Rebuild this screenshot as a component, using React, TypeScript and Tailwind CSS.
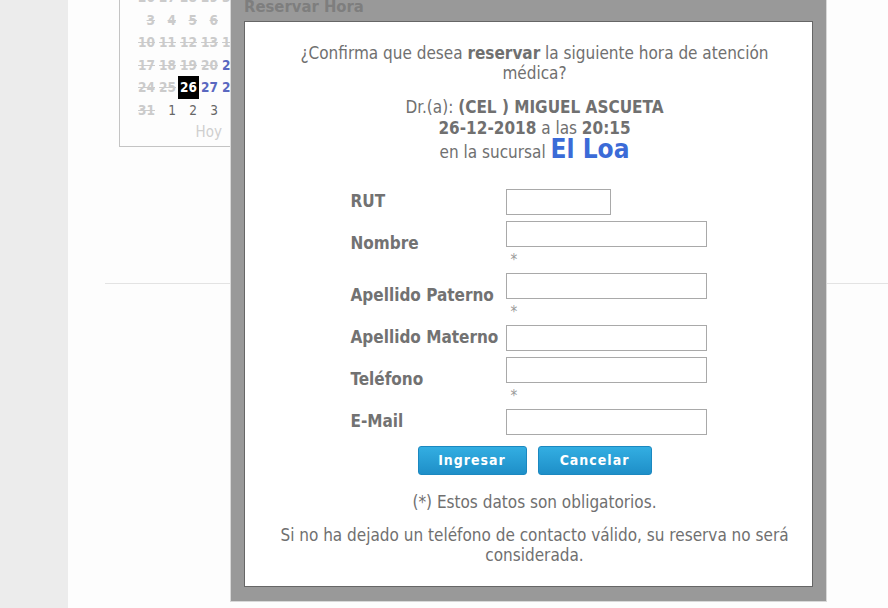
import React from 'react';

const font = { fontFamily: '"DejaVu Sans Condensed", "DejaVu Sans", sans-serif' };

type Cell = { n: string; kind: 'old' | 'sel' | 'free' | 'next' };

const weeks: Cell[][] = [
  ['26', '27', '28', '29', '30'].map((n) => ({ n, kind: 'old' as const })),
  ['3', '4', '5', '6', '7'].map((n) => ({ n, kind: 'old' as const })),
  ['10', '11', '12', '13', '14'].map((n) => ({ n, kind: 'old' as const })),
  [
    { n: '17', kind: 'old' },
    { n: '18', kind: 'old' },
    { n: '19', kind: 'old' },
    { n: '20', kind: 'old' },
    { n: '21', kind: 'free' },
  ],
  [
    { n: '24', kind: 'old' },
    { n: '25', kind: 'old' },
    { n: '26', kind: 'sel' },
    { n: '27', kind: 'free' },
    { n: '28', kind: 'free' },
  ],
  [
    { n: '31', kind: 'old' },
    { n: '1', kind: 'next' },
    { n: '2', kind: 'next' },
    { n: '3', kind: 'next' },
    { n: '4', kind: 'next' },
  ],
];

const cellCls: Record<Cell['kind'], string> = {
  old: 'font-bold text-[#cbcbcb] line-through',
  sel: 'font-bold bg-black text-white',
  free: 'font-bold text-[#5a68c0]',
  next: 'text-[#666]',
};

function Calendar() {
  return (
    <div className="mt-[-14px] ml-[51px] w-[150px] border-l border-b border-[#c4c4c4] pl-[16px] pb-[2px] text-[13.5px]">
      {weeks.map((w, i) => (
        <div key={i} className="flex h-[22.5px]">
          {w.map((c, j) => (
            <div key={j} className={`flex h-full w-[21px] items-center justify-end pr-[2px] ${cellCls[c.kind]}`}>
              {c.n}
            </div>
          ))}
        </div>
      ))}
      <div className="flex h-[23px] w-[86px] items-center justify-end text-[15px] text-[#cfcfcf]">Hoy</div>
    </div>
  );
}

const rows: { label: string; w: string; req?: boolean }[] = [
  { label: 'RUT', w: 'w-[105px]' },
  { label: 'Nombre', w: 'w-[201px]', req: true },
  { label: 'Apellido Paterno', w: 'w-[201px]', req: true },
  { label: 'Apellido Materno', w: 'w-[201px]' },
  { label: 'Teléfono', w: 'w-[201px]', req: true },
  { label: 'E-Mail', w: 'w-[201px]' },
];

function Form() {
  return (
    <table className="mx-auto mt-[23px] border-collapse text-left">
      <tbody>
        {rows.map((r) => (
          <tr key={r.label}>
            <td className="w-[155px] py-[3px] align-middle text-[17px] font-bold text-[#727272]">{r.label}</td>
            <td className="w-[201px] py-[3px] align-top">
              <input className={`block h-[26px] ${r.w} border border-[#a9a9a9] bg-white outline-none`} />
              {r.req && <div className="h-[20px] pl-[5px] pt-[3px] text-[15px] leading-[20px] text-[#9a9a9a]">*</div>}
            </td>
          </tr>
        ))}
      </tbody>
    </table>
  );
}

function Dialog() {
  const btn =
    'h-[29px] rounded-[3px] border border-[#1b88c0] bg-gradient-to-b from-[#33aee2] to-[#1e8fc8] text-[14px] font-bold tracking-[1px] text-white';
  return (
    <div className="absolute left-[230px] top-[-10px] flex h-[612px] w-[597px] flex-col border border-[#d8d8d8] bg-[#999999] px-[13px] pb-[14px]">
      <div className="h-[30px] text-[16.5px] font-bold leading-[32px] text-[#7e7e7e]">Reservar Hora</div>
      <div className="flex-1 border border-[#666] bg-white text-center text-[17px] text-[#707070]">
        <div className="pl-[12px]">
          <p className="mt-[21px] leading-[20px]">
            ¿Confirma que desea <b>reservar</b> la siguiente hora de atención
            <br />
            médica?
          </p>
          <div className="mt-[14px] leading-[21px]">
            <div>
              Dr.(a): <b>(CEL ) MIGUEL ASCUETA</b>
            </div>
            <div>
              <b>26-12-2018</b> a las <b>20:15</b>
            </div>
            <div className="leading-[21px]">
              en la sucursal <span className="text-[26px] font-bold text-[#3b6bd7]">El Loa</span>
            </div>
          </div>
        </div>
        <Form />
        <div className="pl-[12px]">
          <div className="mt-[8px] flex justify-center gap-[11px]">
            <button className={`${btn} w-[109px]`}>Ingresar</button>
            <button className={`${btn} w-[114px]`}>Cancelar</button>
          </div>
          <p className="mt-[17px] leading-[20px]">(*) Estos datos son obligatorios.</p>
          <p className="mt-[13px] leading-[20px]">
            Si no ha dejado un teléfono de contacto válido, su reserva no será
            <br />
            considerada.
          </p>
        </div>
      </div>
    </div>
  );
}

export default function App() {
  return (
    <div className="relative flex h-[608px] w-[888px] overflow-hidden bg-white" style={font}>
      <div className="w-[68px] shrink-0 bg-[#ececec]" />
      <div className="flex-1 bg-[#fdfdfd]">
        <Calendar />
        <div className="ml-[37px] mt-[136px] h-px bg-[#e3e3e3]" />
      </div>
      <Dialog />
    </div>
  );
}
